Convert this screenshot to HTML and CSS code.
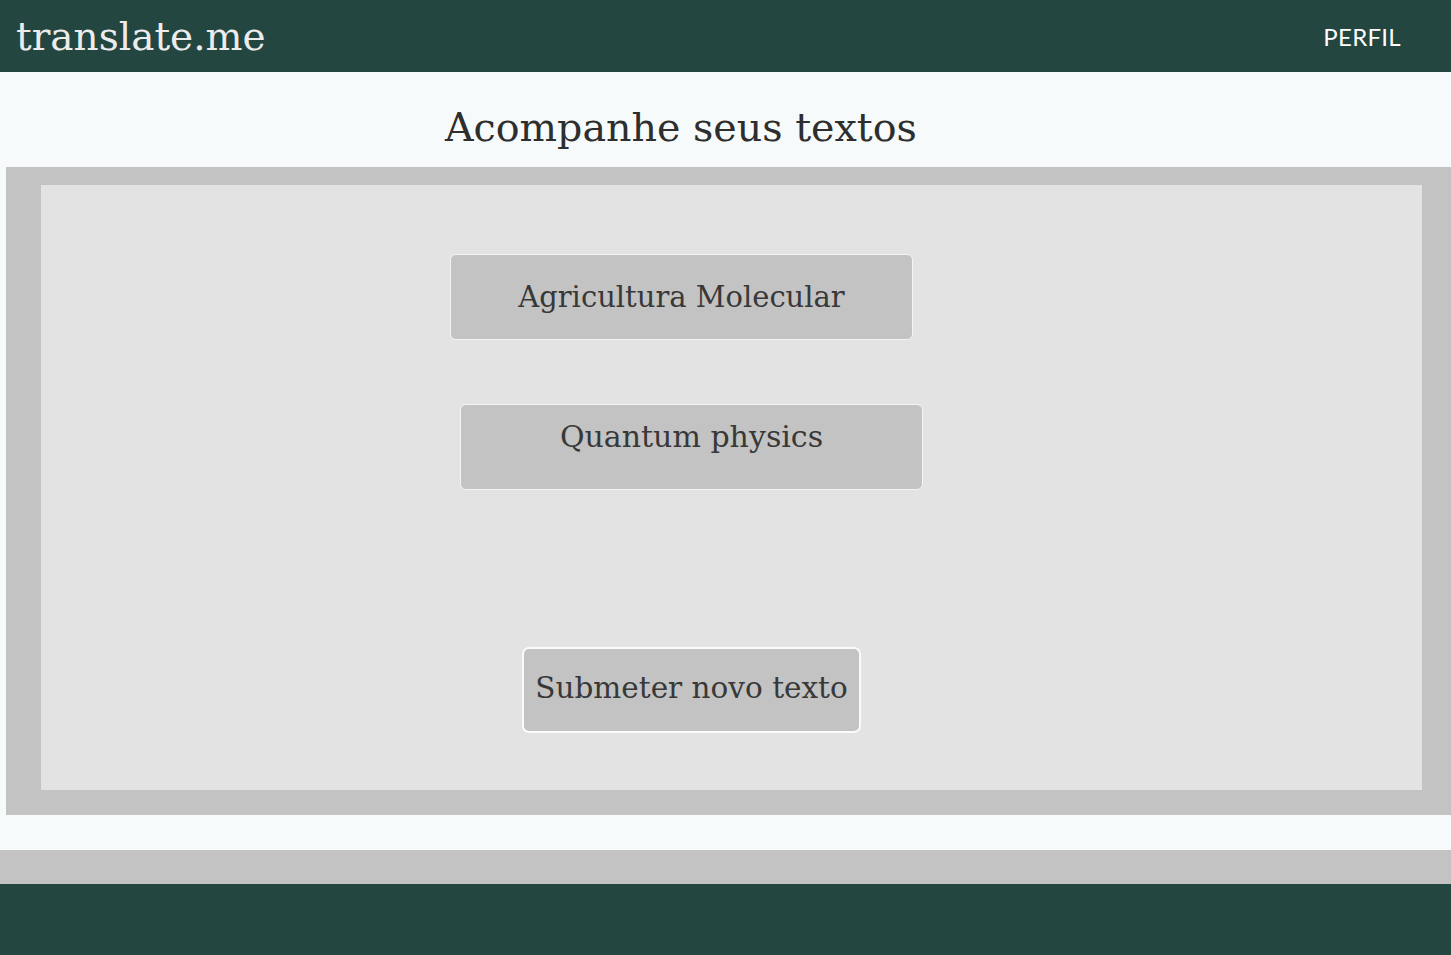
FILE: index.html
```html
<!DOCTYPE html>
<html lang="pt">
<head>
<meta charset="utf-8">
<title>translate.me</title>
<link rel="stylesheet" href="styles.css">
</head>
<body>
<header class="topbar">
  <div class="logo">translate.me</div>
  <nav class="nav"><a class="nav-link" href="#">PERFIL</a></nav>
</header>
<main>
  <h1 class="title">Acompanhe seus textos</h1>
  <section class="panel">
    <div class="panel-inner">
      <button class="card card-1">Agricultura Molecular</button>
      <button class="card card-2">Quantum physics</button>
      <button class="submit">Submeter novo texto</button>
    </div>
  </section>
</main>
<div class="strip"></div>
<footer class="footer"></footer>
</body>
</html>
```
FILE: styles.css
```css
* { box-sizing: border-box; }
html, body { margin: 0; padding: 0; }
body {
  background: #f6fafb;
  font-family: "DejaVu Serif", "Liberation Serif", serif;
  color: #333;
  width: 1451px;
  overflow: hidden;
}
.topbar {
  height: 72px;
  background: #234641;
  display: flex;
  align-items: center;
  justify-content: space-between;
  padding: 0 50px 0 16px;
}
.logo {
  color: #ececec;
  font-family: "DejaVu Serif", serif;
  font-size: 39px;
  font-weight: 300;
  padding-top: 0;
}
.nav-link {
  color: #ffffff;
  text-decoration: none;
  font-family: "Lato", "Open Sans", sans-serif;
  font-size: 24px;
  letter-spacing: 0.3px;
}
.title {
  margin: 0;
  height: 95px;
  padding: 14px 0 0 445px;
  display: flex;
  align-items: center;
  font-weight: 300;
  font-size: 39.6px;
  color: #2e2e2e;
}
.panel {
  margin-left: 6px;
  width: 1445px;
  height: 648px;
  background: #c3c3c3;
  padding: 18px 23px 25px 35px;
}
.panel-inner {
  background: #e3e3e3;
  height: 605px;
  width: 1381px;
  display: flex;
  flex-direction: column;
  align-items: flex-start;
}
.card {
  width: 463px;
  height: 86px;
  background: #c3c3c3;
  border: 1px solid #f4f4f4;
  border-radius: 6px;
  font-family: "DejaVu Serif", serif;
  font-size: 29px;
  color: #383838;
  text-align: center;
  padding: 0;
}
.card-1 {
  margin: 69px 0 0 409px;
}
.card-2 {
  margin: 64px 0 0 419px;
  display: flex;
  justify-content: center;
  align-items: flex-start;
  padding-top: 14px;
  font-size: 30px;
}
.submit {
  margin: 157px 0 0 481px;
  width: 339px;
  height: 86px;
  background: #c3c3c3;
  border: 2px solid #fbfbfb;
  border-radius: 7px;
  font-family: "DejaVu Serif", serif;
  font-size: 29.5px;
  color: #383838;
  padding: 0 0 4px;
}
.strip {
  margin-top: 35px;
  height: 34px;
  background: #c3c3c3;
}
.footer {
  height: 71px;
  background: #234641;
}
```
